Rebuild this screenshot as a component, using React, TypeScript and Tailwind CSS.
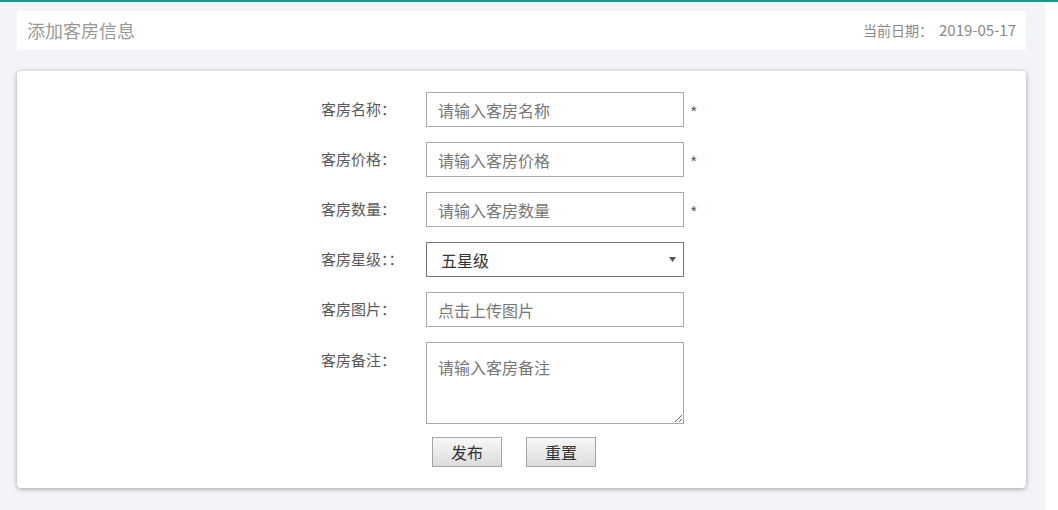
import React from 'react';

const font = { fontFamily: '"Noto Sans CJK SC", "Liberation Sans", sans-serif' };

/* ---------- Text Field Row ---------- */
function FieldRow({ label, children, required, top }: { label: string; children: React.ReactNode; required?: boolean; top?: boolean }) {
  return (
    <div className={`flex ${top ? 'items-start' : 'items-center'}`}>
      <label className={`w-[105px] text-[15px] text-[#5a5a5a] ${top ? 'pt-[7px]' : ''}`}>{label}</label>
      {children}
      {required && <span className="ml-[6px] mt-[4px] text-[16px] text-[#666]">*</span>}
    </div>
  );
}

function TextInput({ placeholder }: { placeholder: string }) {
  return (
    <input
      placeholder={placeholder}
      className="w-[258px] h-[35px] border border-[#a9a9a9] px-[11px] text-[16px] text-[#555] placeholder:text-[#777] outline-none bg-white"
    />
  );
}

/* ---------- Main Page ---------- */
export default function App() {
  return (
    <div className="min-h-screen bg-white border-t-2 border-[#179a8d]" style={font}>
      <div className="w-[1045px] min-h-[508px] bg-[#f3f4f8] pl-[17px] pr-[19px] pt-[9px]">
        {/* Header */}
        <header className="h-[39px] bg-white flex items-center justify-between pl-[10px] pr-[10px]">
          <h1 className="text-[18px] text-[#999]">添加客房信息</h1>
          <div className="text-[#888] flex items-center">
            <span className="text-[14px]">当前日期：</span>
            <span className="text-[15px] ml-[6px]">2019-05-17</span>
          </div>
        </header>

        {/* Form Card */}
        <main className="mt-[21px] h-[417px] bg-white rounded-[4px] shadow-[0_1px_5px_rgba(0,0,0,0.35)] pt-[21px] pl-[304px]">
          <div className="flex flex-col gap-[15px]">
            <FieldRow label="客房名称：" required>
              <TextInput placeholder="请输入客房名称" />
            </FieldRow>
            <FieldRow label="客房价格：" required>
              <TextInput placeholder="请输入客房价格" />
            </FieldRow>
            <FieldRow label="客房数量：" required>
              <TextInput placeholder="请输入客房数量" />
            </FieldRow>
            <FieldRow label="客房星级：：">
              <div className="relative w-[258px] h-[35px] border border-[#777] flex items-center px-[14px] text-[16px] text-[#333] bg-white">
                五星级
                <svg className="absolute right-[7px] top-[13px]" width="7" height="7" viewBox="0 0 7 7">
                  <path d="M0 1 L7 1 L3.5 6 Z" fill="#555" />
                </svg>
              </div>
            </FieldRow>
            <FieldRow label="客房图片：">
              <TextInput placeholder="点击上传图片" />
            </FieldRow>
            <FieldRow label="客房备注：" top>
              <textarea
                placeholder="请输入客房备注"
                className="w-[258px] h-[82px] border border-[#a9a9a9] px-[11px] pt-[12px] text-[16px] text-[#555] placeholder:text-[#777] outline-none resize-y"
              />
            </FieldRow>
          </div>
          <div className="flex gap-[24px] mt-[13px] ml-[111px]">
            <button className="w-[70px] h-[30px] border border-[#a6a6a6] bg-gradient-to-b from-[#f8f8f8] to-[#dcdcdc] text-[16px] text-[#333]">发布</button>
            <button className="w-[70px] h-[30px] border border-[#a6a6a6] bg-gradient-to-b from-[#f8f8f8] to-[#dcdcdc] text-[16px] text-[#333]">重置</button>
          </div>
        </main>
      </div>
    </div>
  );
}
